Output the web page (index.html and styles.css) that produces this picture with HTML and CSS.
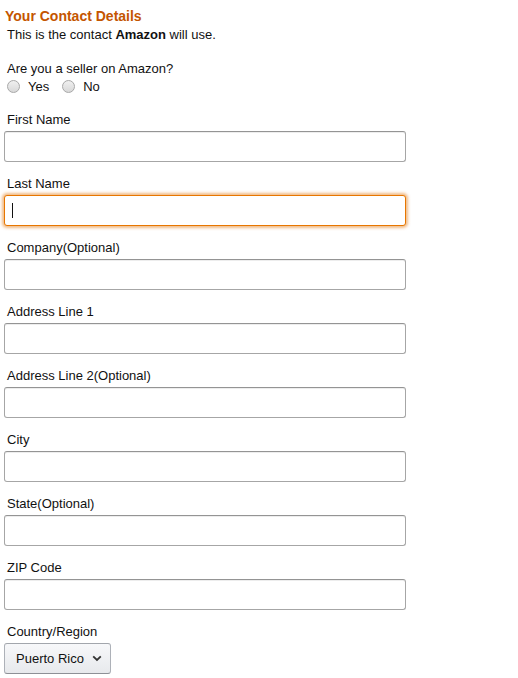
FILE: index.html
```html
<!DOCTYPE html>
<html>
<head>
<meta charset="utf-8">
<link rel="stylesheet" href="styles.css">
</head>
<body>
<div class="form">
  <h2 class="title">Your Contact Details</h2>
  <p class="sub">This is the contact <b>Amazon</b> will use.</p>
  <div class="seller">
    <div class="q">Are you a seller on Amazon?</div>
    <div class="radios">
      <label class="radio"><span class="dot"></span>Yes</label>
      <label class="radio"><span class="dot"></span>No</label>
    </div>
  </div>
  <div class="field"><label>First Name</label><div class="input"></div></div>
  <div class="field"><label>Last Name</label><div class="input focused"><span class="caret"></span></div></div>
  <div class="field"><label>Company(Optional)</label><div class="input"></div></div>
  <div class="field"><label>Address Line 1</label><div class="input"></div></div>
  <div class="field"><label>Address Line 2(Optional)</label><div class="input"></div></div>
  <div class="field"><label>City</label><div class="input"></div></div>
  <div class="field"><label>State(Optional)</label><div class="input"></div></div>
  <div class="field"><label>ZIP Code</label><div class="input"></div></div>
  <div class="field"><label>Country/Region</label>
    <div class="select">Puerto Rico
      <svg class="chev" width="10" height="7" viewBox="0 0 10 7"><path d="M1.2 1.3 L5 5 L8.8 1.3" fill="none" stroke="#333" stroke-width="1.8"/></svg>
    </div>
  </div>
</div>
</body>
</html>
```
FILE: styles.css
```css
html, body { margin: 0; padding: 0; background: #fff; }
body { font-family: "Liberation Sans", Arial, sans-serif; font-size: 13px; color: #111; }
.form { padding: 8px 0 0 4px; width: 402px; }
.title { margin: 0 0 0 1px; font-size: 14px; font-weight: bold; color: #c45500; line-height: 17px; }
.sub { margin: 1px 0 0 3px; line-height: 17px; }
.seller { margin: 17px 0 0 3px; padding-bottom: 3px; }
.q { line-height: 17px; }
.radios { display: flex; gap: 13px; margin-top: 1px; line-height: 17px; }
.radio { display: flex; align-items: center; gap: 8px; }
.dot { width: 11px; height: 11px; border-radius: 50%; border: 1px solid #a8a8a8; background: linear-gradient(#f0f0f0, #d8d8d8); display: inline-block; }
.field { margin-top: 13px; }
.field label { display: block; margin-left: 3px; line-height: 17px; margin-bottom: 3px; }
.input { position: relative; height: 29px; border: 1px solid #a6a6a6; border-top-color: #949494; border-radius: 3px; box-shadow: 0 1px 0 rgba(255,255,255,.5), inset 0 1px 0 rgba(0,0,0,.07); background: #fff; }
.input.focused { border-color: #e77600; box-shadow: 0 0 3px 2px rgba(228,121,17,.5); }
.caret { position: absolute; left: 7px; top: 7px; width: 1px; height: 15px; background: #111; }
.select { display: inline-flex; align-items: center; gap: 8px; height: 29px; padding: 0 8px 0 11px; border: 1px solid #adb1b8; border-top-color: #a2a6ac; border-bottom-color: #8d9096; border-radius: 3px; background: linear-gradient(#f7f8fa, #e7e9ec); color: #111; }
.chev { display: block; }
```
